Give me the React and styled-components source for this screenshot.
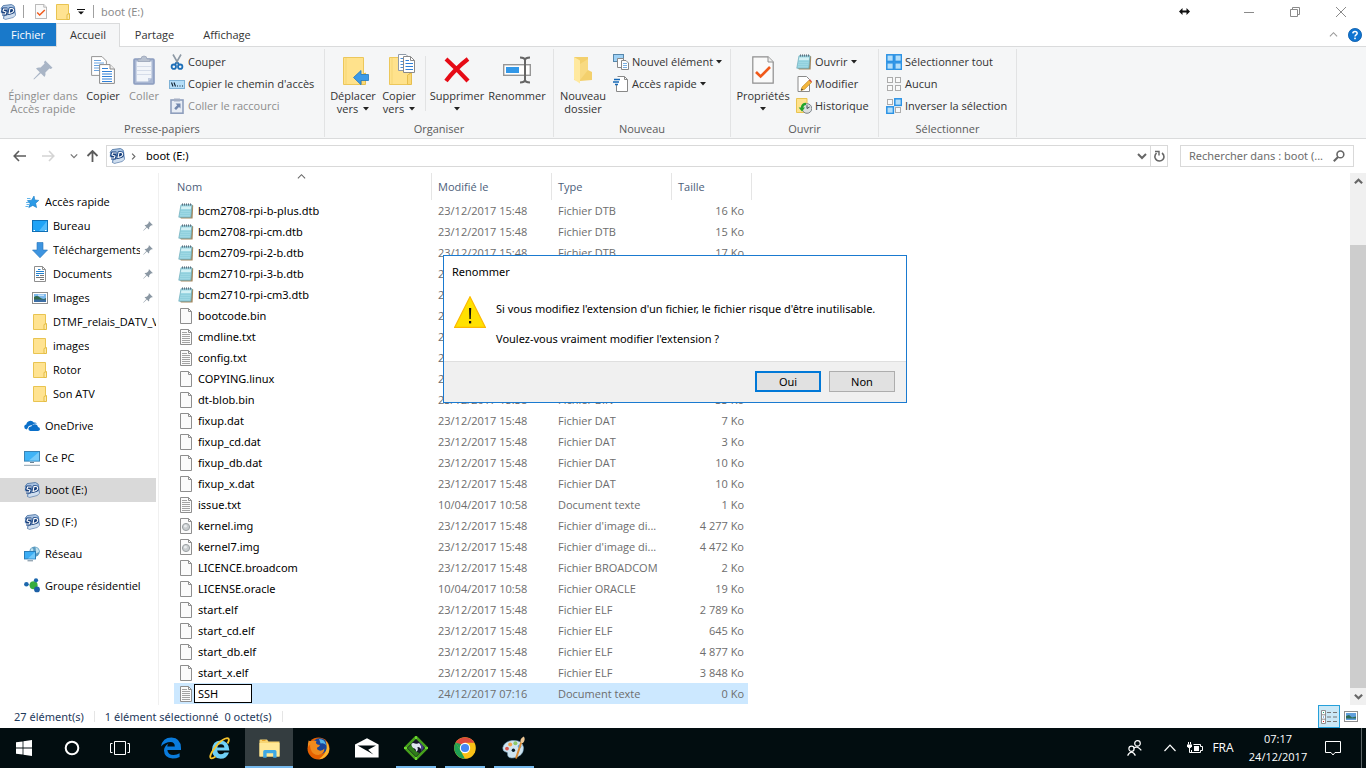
import React, { useState } from 'react';
import styled, { createGlobalStyle } from 'styled-components';

const GlobalStyle = createGlobalStyle`
	* {
		box-sizing: border-box;
	}
	body {
		margin: 0;
		background: #fff;
		color: #000;
		font-family: 'Open Sans', 'Noto Sans', sans-serif;
		font-size: 11px;
		line-height: 16px;
	}
	button, input {
		font: inherit;
		color: inherit;
	}
	svg {
		display: block;
		flex: none;
	}
`;

const wideFont = "'Noto Sans', 'Open Sans', sans-serif";

/* ---------- icons ---------- */

const SdIcon = () => (
	<svg width="16" height="16" viewBox="0 0 16 16">
		<path d="M3.2 1.6 L11.5 .5 L14.2 2.2 L14.6 5 L4 6 L1 4.4Z" fill="#a9c3e2" stroke="#47709f" strokeWidth=".8" />
		<path d="M1 4.4 L4 5 L15 3 L15.8 10.6 L13 13.4 L5.5 15.4 L3 14.6 L3.6 10 L.8 9Z" fill="#6f97c8" />
		<path d="M4.4 11.6 L15 8.6 L15.6 11.4 L13 13.6 L5.6 15.4 L3.4 14.5Z" fill="#cfdeef" stroke="#5577a3" strokeWidth=".6" />
		<path d="M7.4 5 H3.6 L3 7 L6 8 L5.4 10 H2" fill="none" stroke="#173f7c" strokeWidth="3" />
		<path d="M10 4.6 L9 9.4 Q13.2 9 13.8 6.4 Q13.8 4.2 10 4.6Z" fill="#173f7c" stroke="#173f7c" strokeWidth="2.6" />
		<path d="M7.4 5 H3.6 L3 7 L6 8 L5.4 10 H2" fill="none" stroke="#fff" strokeWidth="1.1" />
		<path d="M10 4.6 L9 9.4 Q13.2 9 13.8 6.4 Q13.8 4.2 10 4.6Z" fill="none" stroke="#fff" strokeWidth="1.1" />
	</svg>
);

const CheckDoc = ({ width, height }) => (
	<svg width={width} height={height} viewBox="0 0 22 28" preserveAspectRatio="none">
		<path d="M.8 .8 H16 L21.2 6 V27.2 H.8Z" fill="#fafafa" stroke="#8e8e8e" strokeWidth="1.2" />
		<path d="M16 .8 V6 H21.2" fill="#eee" stroke="#8e8e8e" />
		<path d="M4 16 L8.6 20.5 L18 11" fill="none" stroke="#f0591a" strokeWidth="2.6" />
	</svg>
);

const FolderIcon = () => (
	<svg width="14" height="16" viewBox="0 0 14 16">
		<path d="M.5 .5 H12.5 V15.5 H.5Z" fill="#ffe391" stroke="#e9c451" />
		<path d="M11 10.5 L13.5 9.5 V15.5 H11Z" fill="#ffe9a6" stroke="#e4bd45" />
	</svg>
);

const PinIcon = ({ size = 10, color = '#8a97a3' }) => (
	<svg width={size} height={size} viewBox="0 0 20 20">
		<path d="M12.2 .5 L19.5 7.8 L17.8 9 L16.4 8.4 L12.4 12.4 Q13 15 11.5 17 L7.8 13.2 L1 19.6 L.4 19 L6.8 12.2 L3 8.4 Q5 7 7.6 7.6 L11.6 3.6 L11 2.2Z" fill={color} />
	</svg>
);

const CopyIcon = () => (
	<svg width="24" height="28" viewBox="0 0 24 28">
		<path d="M.6 .6 H11 L15.4 5 V19.4 H.6Z" fill="#fff" stroke="#969696" />
		<path d="M3 4.5H10M3 7H13M3 9.5H13M3 12H13M3 14.5H13" stroke="#6ba4e0" />
		<path d="M8.6 8.6 H19 L23.4 13 V27.4 H8.6Z" fill="#fff" stroke="#8a8a8a" />
		<path d="M19 8.6 V13 H23.4" fill="#eee" stroke="#8a8a8a" />
		<path d="M11 12.5H17M11 15.5H21M11 18H21M11 20.5H21M11 23H21M11 25.5H21" stroke="#2f7fd6" />
	</svg>
);

const PasteIcon = () => (
	<svg width="22" height="30" viewBox="0 0 22 30">
		<rect x="1" y="4" width="20" height="25" rx="1" fill="#a9b7d3" stroke="#8c9dc0" strokeWidth="1.6" />
		<path d="M3.5 6.5 H18.5 V23 L15 26.5 H3.5Z" fill="#f2f5fa" />
		<path d="M4 11.5H18M4 15.5H18M4 19.5H18" stroke="#d5dce9" />
		<path d="M15 26.5 V23 H18.5Z" fill="#c1cbdf" />
		<path d="M5 6.5 V4 H8 Q8 1 11 1 Q14 1 14 4 H17 V6.5Z" fill="#b8c1d0" stroke="#96a1b5" strokeWidth=".7" />
	</svg>
);

const ScissorsIcon = () => (
	<svg width="16" height="16" viewBox="0 0 16 16">
		<path d="M4 .5 L10 11 M12 .5 L6 11" stroke="#8d99a5" strokeWidth="1.6" />
		<path d="M8.6 8.4L10.2 11M7.4 8.4L5.8 11" stroke="#1d6fb8" strokeWidth="1.6" />
		<circle cx="4.8" cy="12.7" r="2.2" fill="none" stroke="#1d6fb8" strokeWidth="1.8" />
		<circle cx="11.2" cy="12.7" r="2.2" fill="none" stroke="#1d6fb8" strokeWidth="1.8" />
	</svg>
);

const PathIcon = () => (
	<svg width="16" height="16" viewBox="0 0 16 16">
		<rect x=".5" y="4.5" width="15" height="8" fill="#b5def8" stroke="#7fb2d6" />
		<path d="M2.5 6.5L4 10.5M5 6.5L6.5 10.5" stroke="#123" strokeWidth="1.1" />
		<path d="M8 10h1M10.5 10h1M13 10h1" stroke="#123" />
	</svg>
);

const ShortcutIcon = () => (
	<svg width="16" height="16" viewBox="0 0 16 16">
		<rect x="2" y="2" width="12" height="13.2" fill="#e8edf5" stroke="#8f9fbd" strokeWidth="1.6" />
		<path d="M5 .5H11V3.5H5Z" fill="#a4afc4" />
		<path d="M6.5 5.5 H11.5 V10.5 L10 9 L7 12 L5.2 10.2 L8.2 7.2Z" fill="#7388ae" />
	</svg>
);

const RibbonFolder = ({ children }) => (
	<svg width="32" height="32" viewBox="-6 -3 32 32">
		<path d="M.5 .5 H20.5 V27.5 H.5Z" fill="#ffe28c" stroke="#ecc75b" />
		<path d="M3 1V27" stroke="#f5d675" />
		<path d="M18.5 18 L22.5 16 V27.5 H18.5Z" fill="#fbd977" stroke="#e7bf4f" />
		{children}
	</svg>
);

const MoveArrow = () => (
	<path d="M10.5 20.5 L18 13.5 V17.5 H25.5 V23.5 H18 V27.8Z" fill="#3b9ae8" stroke="#2178c0" strokeWidth=".8" />
);

const MiniPages = () => (
	<g transform="translate(9 -3)">
		<path d="M.5 .5 H8 L11 3.5 V16.5 H.5Z" fill="#fff" stroke="#8f9aa8" />
		<path d="M2.5 4.5H7M2.5 7.5H7M2.5 10.5H7M2.5 13.5H7" stroke="#4c8fd6" />
		<path d="M5.5 2.5 H12.5 L16.5 6.5 V18.5 H5.5Z" fill="#fff" stroke="#8a8a8a" />
		<path d="M12.5 2.5V6.5H16.5" fill="none" stroke="#8a8a8a" />
		<path d="M7.5 6.5H11M7.5 9.5H15M7.5 12.5H15M7.5 15.5H15" stroke="#2f7fd6" />
	</g>
);

const DeleteIcon = () => (
	<svg width="26" height="26" viewBox="0 0 26 26">
		<path d="M2 2 Q13 12 24 24 M24 2 Q11 12 2 24" stroke="#e60b16" strokeWidth="4.2" fill="none" />
	</svg>
);

const RenameIcon = () => (
	<svg width="28" height="28" viewBox="0 0 28 28">
		<rect x=".7" y="8.7" width="26.6" height="10.6" fill="#fff" stroke="#969696" strokeWidth="1.4" />
		<rect x="3" y="11" width="13" height="6" fill="#3298e8" />
		<path d="M17 1.5 Q21.5 1.5 22 4 Q22.5 1.5 27 1.5 M22 3 V25 M17 26.5 Q21.5 26.5 22 24 Q22.5 26.5 27 26.5" stroke="#666" strokeWidth="2" fill="none" />
	</svg>
);

const NewFolderIcon = () => (
	<svg width="20" height="28" viewBox="0 0 20 28">
		<path d="M1 1 H15 V14 L19 16 V24 L7 25 L1 24Z" fill="#f3d06d" />
		<path d="M1 1 L7 4.5 V27.5 L1 23.5Z" fill="#ffe99f" />
		<path d="M7 8 L15 3 V14 L7 24Z" fill="#f8da82" />
	</svg>
);

const NewItemIcon = () => (
	<svg width="16" height="16" viewBox="0 0 16 16">
		<rect x=".5" y=".5" width="10" height="7" fill="#9fd1f5" stroke="#5787ab" />
		<path d="M4.5 4.5H10.5V13.5H4.5Z" fill="#fff" stroke="#888" />
		<path d="M8.5 6.5H13L15.5 9V15.5H8.5Z" fill="#fff" stroke="#888" />
		<path d="M10 9.5H14M10 11.5H14M10 13.5H14" stroke="#7ab0e2" />
	</svg>
);

const EasyAccessIcon = () => (
	<svg width="16" height="16" viewBox="0 0 16 16">
		<path d="M4.5 .5H11.5L14.5 3.5V15.5H3.5V9" fill="#fff" stroke="#888" />
		<path d="M11.5 .5V3.5H14.5" fill="none" stroke="#888" />
		<path d="M1 3.5H7M0 6H6M2 8.5H5" stroke="#1668b5" strokeWidth="1.3" />
	</svg>
);

const NotepadIcon = () => (
	<svg width="16" height="16" viewBox="0 0 16 16">
		<path d="M13 1.5 L15.2 2.4 L14.6 15.5 L3 15.6 L2 14.5Z" fill="#a58a61" />
		<path d="M3 1.8 H14 L12.8 14.2 H.8Z" fill="#9ed8e4" stroke="#68a9b8" strokeWidth=".7" />
		<path d="M3.4 3.4 H13.2 L12.8 6 H3Z" fill="#d3f1f5" />
		<path d="M2.6 7.5H12.8M2.3 9.5H12.5M2 11.5H12.3" stroke="#83c8d7" strokeWidth=".5" />
		<path d="M4.5 .4V2.6M6.5 .4V2.6M8.5 .4V2.6M10.5 .4V2.6M12.5 .4V2.6" stroke="#567" strokeWidth=".9" />
	</svg>
);

const EditIcon = () => (
	<svg width="16" height="16" viewBox="0 0 16 16">
		<path d="M2 .5H10.5L13.5 3.5V15.5H2Z" fill="#fff" stroke="#8a8a8a" />
		<path d="M5 14.5 L6 11 L13 4.2 L15.5 6.4 L8.5 13.4Z" fill="#f4b63c" stroke="#b98322" strokeWidth=".6" />
		<path d="M13 4.2 L14 3.3 L16 5.6 L15.3 6.4Z" fill="#d94c3a" />
		<path d="M5 14.5L5.7 12.4L7 13.8Z" fill="#333" />
	</svg>
);

const HistoryIcon = () => (
	<svg width="16" height="16" viewBox="0 0 16 16">
		<path d="M.5 .5H11V14.5H.5Z" fill="#ffe28c" stroke="#e9c451" />
		<circle cx="11" cy="10.5" r="4.8" fill="#dcdfe0" stroke="#7b8388" />
		<path d="M11 10.5V7.2M11 10.5L13.6 9" stroke="#454b50" />
		<path d="M10 4.8 Q5.2 5 4.8 9.4 H2.6 L6 13.6 L9 9.4 H7.2 Q7.4 7.2 10 7Z" fill="#22a42a" />
	</svg>
);

const SelectIcon = ({ filled }) => (
	<svg width="16" height="16" viewBox="0 0 16 16">
		{[[0, 0], [8, 0], [0, 8], [8, 8]].map(([x, y], i) => (
			<rect
				key={i}
				x={filled[i] ? x + 0.8 : x + 1.5}
				y={filled[i] ? y + 0.8 : y + 1.5}
				width={filled[i] ? 6.6 : 5}
				height={filled[i] ? 6.6 : 5}
				fill={filled[i] ? '#b3defa' : '#fafafa'}
				stroke={filled[i] ? '#2b92e4' : '#acacac'}
				strokeWidth={filled[i] ? 1.5 : 1}
			/>
		))}
	</svg>
);

const PageIcon = ({ lines, disc }) => (
	<svg width="12" height="16" viewBox="0 0 12 16">
		<path d="M.5 .5H8.5L11.5 3.5V15.5H.5Z" fill="#fbfbfb" stroke="#8e8e8e" />
		<path d="M8.5 .5V3.5H11.5" fill="none" stroke="#8e8e8e" />
		{lines && <path d="M2 3.5H7M2 5.5H10M2 7.5H10M2 9.5H10M2 11.5H10M2 13.5H10" stroke="#a3a3a3" />}
		{disc && <circle cx="6" cy="9" r="3.6" fill="#c9cdcf" stroke="#9da2a5" />}
		{disc && <circle cx="5.4" cy="8.2" r="1.4" fill="#e9ecee" />}
	</svg>
);

const StarIcon = () => (
	<svg width="16" height="16" viewBox="0 0 16 16">
		<path d="M10 2 L10.8 6 L14.8 6.4 L11.6 9.2 L12.6 13.6 L8.8 11.4 L4.8 13.6 L6 9.6 L3.4 6.6 L7.6 6.2Z" fill="#2b9ae6" stroke="#1478c4" strokeWidth=".6" />
		<path d="M3 4.5H6.5M2 8.5H5M2.5 10.5H5M1.5 12.5H4.5" stroke="#62b4ea" />
	</svg>
);

const DesktopIcon = () => (
	<svg width="16" height="16" viewBox="0 0 16 16">
		<rect x=".5" y="2.5" width="15" height="11" fill="#1fa3f7" stroke="#0f6fb5" />
		<path d="M15 3 V13 H7Z" fill="#53bbfb" />
		<path d="M1.5 12.5H3M13 12.5H14.5" stroke="#fff" />
	</svg>
);

const DownloadIcon = () => (
	<svg width="16" height="16" viewBox="0 0 16 16">
		<path d="M5 .5H11V8H15.5L8 15.8L.5 8H5Z" fill="#3d94e0" stroke="#2573b8" strokeWidth=".6" />
	</svg>
);

const DocumentsIcon = () => (
	<svg width="16" height="16" viewBox="0 0 16 16">
		<path d="M2.5 .5H10.5L13.5 3.5V15.5H2.5Z" fill="#fff" stroke="#8e8e8e" />
		<path d="M10.5 .5V3.5H13.5" fill="none" stroke="#8e8e8e" />
		<path d="M6 3.5H8.5M4 5.5H12M4 7.5H12M4 9.5H7" stroke="#2480cc" />
		<path d="M8 9.5H12M4 11.5H12M8 13.5H12" stroke="#777" />
	</svg>
);

const PicturesIcon = () => (
	<svg width="16" height="16" viewBox="0 0 16 16">
		<rect x=".5" y="2.5" width="15" height="11" fill="#fff" stroke="#8e8e8e" />
		<rect x="2" y="4" width="12" height="8" fill="#7db9ec" />
		<path d="M2 7Q5 5 8 7.5T14 8V10H2Z" fill="#32684c" />
		<path d="M2 9.5H14V12H2Z" fill="#3c6ea5" />
		<path d="M6 5.2h6" stroke="#e6f2fc" />
	</svg>
);

const OneDriveIcon = () => (
	<svg width="16" height="16" viewBox="0 0 16 16">
		<path d="M2.6 11.6 Q0 11 .2 8.6 Q.5 6.8 2.3 6.6 Q2.6 3.4 5.6 2.9 Q8.4 2.5 9.8 4.6 Q11.6 4 13 5.6 Q9.6 4.9 8 7.2 Q4.4 7 3.8 10Z" fill="#0a6fc9" />
		<path d="M6.4 13 Q4.2 12.6 4.4 10.4 Q4.8 8.4 7.2 8.6 Q8.2 6 11 6.2 Q13.6 6.5 14 9 Q16 9.4 16 11.2 Q15.8 13 14 13Z" fill="#0a6fc9" />
	</svg>
);

const PcIcon = () => (
	<svg width="16" height="16" viewBox="0 0 16 16">
		<rect x=".5" y="1.5" width="15" height="9.6" fill="#40b4f7" stroke="#3b84b5" />
		<path d="M15 2V10.6H5Z" fill="#76cbfa" />
		<path d="M6 12.5H10" stroke="#6b8396" />
		<path d="M0 15.3H16" stroke="#8fa1ad" />
	</svg>
);

const NetworkIcon = () => (
	<svg width="16" height="16" viewBox="0 0 16 16">
		<circle cx="10.6" cy="5.6" r="5.2" fill="#5b9bc0" />
		<path d="M7 2.6Q9.4 1.4 9.4 4T6.2 6Z M11.6 1Q15.2 2.6 15 6L12 7.5Z" fill="#bfe0ee" />
		<rect x=".5" y="5.5" width="11" height="7.4" fill="#3cadf4" stroke="#2a7db8" />
		<path d="M11 6V12.4H4Z" fill="#70c8fa" />
		<path d="M3.5 14.8H9" stroke="#6b8396" />
	</svg>
);

const HomegroupIcon = () => (
	<svg width="16" height="16" viewBox="0 0 16 16">
		<path d="M2.5 6L9.5 8L11.5 2.5M9.5 8L12.6 12" stroke="#9bbdd8" strokeWidth=".8" fill="none" />
		<circle cx="9.6" cy="7.2" r="4" fill="#38ad3d" />
		<circle cx="2.4" cy="6.2" r="2.3" fill="#1c67ad" />
		<circle cx="12" cy="2.3" r="2.1" fill="#1c67ad" />
		<circle cx="13" cy="11.4" r="2.9" fill="#1c5fa6" />
	</svg>
);

const Arrow = ({ dir, color }) => (
	<svg width="13" height="12" viewBox="0 0 13 12">
		{dir === 'back' && <path d="M13 6H1.5M6 1L1.2 6L6 11" stroke={color} strokeWidth="1.6" fill="none" />}
		{dir === 'forward' && <path d="M0 6H11.5M7 1L11.8 6L7 11" stroke={color} strokeWidth="1.6" fill="none" />}
		{dir === 'up' && <path d="M6.5 12V1M1.5 6L6.5 1L11.5 6" stroke={color} strokeWidth="1.8" fill="none" />}
	</svg>
);

const Chevron = ({ dir = 'down', color = '#666', w = 9, thick = 1.6 }) => {
	const turn = { down: 0, up: 180, right: -90 }[dir];
	return (
		<svg width={w} height={w} viewBox="0 0 10 10">
			<path d="M1 3L5 7L9 3" transform={`rotate(${turn} 5 5)`} stroke={color} strokeWidth={thick} fill="none" />
		</svg>
	);
};

const Caret = () => (
	<svg width="6" height="4" viewBox="0 0 6 4">
		<path d="M0 0H6L3 3.6Z" fill="#222" />
	</svg>
);

/* ---------- title bar and tabs ---------- */

const Window = styled.div`
	display: flex;
	flex-direction: column;
	height: 100vh;
	overflow: hidden;
`;

const TitleBar = styled.header`
	display: flex;
	align-items: center;
	height: 23px;
	flex: none;
	padding-right: 2px;
	color: #8c8c8c;
`;

const Separator = styled.span`
	width: 1px;
	height: 13px;
	margin: 0 ${(p) => p.$after}px 0 ${(p) => p.$before}px;
	background: #a0a0a0;
`;

const IconButton = styled.button`
	display: flex;
	align-items: center;
	justify-content: center;
	width: ${(p) => p.$w || 22}px;
	height: ${(p) => p.$h || 22}px;
	padding: 0;
	border: 0;
	background: none;
`;

const Title = styled.span`
	flex: 1;
	font-family: ${wideFont};
`;

const WindowButtons = styled.div`
	display: flex;
	align-items: center;
`;

const TabRow = styled.div`
	display: flex;
	height: 24px;
	flex: none;
	border-bottom: 1px solid #dadbdc;
`;

const Tab = styled.button`
	width: ${(p) => p.$w}px;
	height: 24px;
	padding: 0 0 2px;
	border: 1px solid ${(p) => (p.$active ? '#dadbdc' : 'transparent')};
	border-bottom: 0;
	background: ${(p) => (p.$active ? '#f5f6f7' : 'transparent')};
	color: #333;
`;

const FileTab = styled(Tab)`
	height: 23px;
	padding: 0;
	border: 0;
	background: #1979ca;
	color: #fff;
`;

const TabTools = styled.div`
	display: flex;
	align-items: center;
	margin-left: auto;
`;

/* ---------- ribbon ---------- */

const Ribbon = styled.div`
	display: flex;
	height: 92px;
	flex: none;
	background: #f5f6f7;
	border-bottom: 1px solid #dadbdc;
`;

const Group = styled.section`
	display: flex;
	flex-direction: column;
	width: ${(p) => p.$w}px;
	height: 88px;
	margin-top: 2px;
	padding: 0 3px;
	border-right: 1px solid #e2e3e4;
`;

const GroupBody = styled.div`
	display: flex;
	flex: 1;
`;

const GroupLabel = styled.div`
	height: 16px;
	text-align: center;
	color: #5a5a5a;
`;

const BigButton = styled.button`
	display: flex;
	flex-direction: column;
	align-items: center;
	width: ${(p) => p.$w}px;
	padding: 5px 0 0;
	border: 0;
	background: none;
	line-height: 13px;
	white-space: nowrap;
	color: ${(p) => (p.$off ? '#8d8d8d' : '#333')};
`;

const BigIcon = styled.span`
	display: flex;
	align-items: center;
	justify-content: center;
	height: 32px;
	margin-bottom: 3px;
`;

const SecondLine = styled.span`
	display: flex;
	align-items: center;
	justify-content: center;
	gap: 5px;
	height: 13px;
`;

const InnerLine = styled.span`
	width: 1px;
	height: 55px;
	margin: 7px 4px 0 5px;
	background: #e2e3e4;
`;

const SmallList = styled.div`
	display: flex;
	flex-direction: column;
	margin: 2px 0 0 4px;
`;

const SmallButton = styled.button`
	display: flex;
	align-items: center;
	gap: 3px;
	height: 22px;
	padding: 0;
	border: 0;
	background: none;
	white-space: nowrap;
	color: ${(p) => (p.$off ? '#8d8d8d' : '#333')};
`;

/* ---------- address bar ---------- */

const NavRow = styled.div`
	display: flex;
	align-items: center;
	height: 34px;
	flex: none;
	padding: 0 12px 0 8px;
`;

const AddressBox = styled.div`
	display: flex;
	align-items: center;
	flex: 1;
	height: 22px;
	margin-left: 3px;
	padding-left: 2px;
	border: 1px solid #d9d9d9;
`;

const Crumb = styled.button`
	padding: 0;
	border: 0;
	background: none;
	margin-left: 5px;
	font-family: ${wideFont};
`;

const AddressEnd = styled.div`
	display: flex;
	align-items: center;
	height: 20px;
	margin-left: auto;
`;

const Refresh = styled(IconButton)`
	width: 17px;
	height: 20px;
	border-left: 1px solid #d9d9d9;
`;

const SearchBox = styled.label`
	display: flex;
	align-items: center;
	width: 174px;
	height: 22px;
	margin-left: 12px;
	padding: 0 8px;
	border: 1px solid #d9d9d9;

	input {
		flex: 1;
		min-width: 0;
		padding: 0;
		border: 0;
		outline: 0;
		background: none;
		font-family: ${wideFont};
	}
	input::placeholder {
		color: #6d6d6d;
		opacity: 1;
	}
`;

/* ---------- tree and file list ---------- */

const Main = styled.main`
	display: flex;
	flex: 1;
	min-height: 0;
`;

const Sidebar = styled.nav`
	width: 159px;
	flex: none;
	padding: 17px 2px 0 0;
	border-right: 1px solid #f0f0f0;
`;

const TreeItem = styled.a`
	display: flex;
	align-items: center;
	height: 24px;
	margin-top: ${(p) => (p.$gap ? 8 : 0)}px;
	padding-left: ${(p) => (p.$child ? 32 : 24)}px;
	background: ${(p) => (p.$selected ? '#d9d9d9' : 'transparent')};
	color: #000;
	text-decoration: none;
	white-space: nowrap;
`;

const TreeIcon = styled.span`
	display: flex;
	justify-content: center;
	width: 16px;
	margin-right: 5px;
	flex: none;
`;

const TreeText = styled.span`
	overflow: hidden;
	width: ${(p) => (p.$pinned ? '87px' : 'auto')};
	margin-right: ${(p) => (p.$pinned ? 3 : 0)}px;
`;

const ListArea = styled.div`
	flex: 1;
	min-width: 0;
	padding-left: 15px;
	overflow: hidden;
`;

const FileTable = styled.table`
	width: 578px;
	table-layout: fixed;
	border-collapse: separate;
	border-spacing: 0;
`;

const Th = styled.th`
	height: 27px;
	padding: 0 0 0 ${(p) => (p.$first ? 3 : 6)}px;
	border-right: 1px solid #e5e5e5;
	text-align: left;
	font-weight: 400;
	color: #4c607a;
`;

const SortMark = styled.span`
	position: absolute;
	top: 172px;
	left: 297px;
`;

const Row = styled.tr`
	td {
		background: ${(p) => (p.$selected ? '#cce8ff' : 'transparent')};
		background-clip: padding-box;
	}
`;

const Td = styled.td`
	height: 21px;
	padding: 0 0 0 ${(p) => (p.$right ? 0 : 6)}px;
	color: #6d6d6d;
	white-space: nowrap;
	text-align: ${(p) => (p.$right ? 'right' : 'left')};

	&:last-child {
		padding-right: 4px;
		border-right: 4px solid transparent;
	}
`;

const FileName = styled.div`
	display: flex;
	align-items: center;
	height: 21px;
	color: #000;
	font-family: ${wideFont};
`;

const FileIconBox = styled.span`
	display: flex;
	justify-content: center;
	width: 16px;
	margin: 0 4px 0 -2px;
`;

const RenameInput = styled.input`
	width: 58px;
	height: 19px;
	margin-left: -4px;
	padding: 0 3px;
	border: 1px solid #000;
	outline: 0;
	background: #fff;
`;

const Scrollbar = styled.div`
	display: flex;
	flex-direction: column;
	width: 16px;
	flex: none;
	background: #f0f0f0;
`;

const ScrollButton = styled(IconButton)`
	width: 16px;
	height: 17px;
`;

const ScrollTrack = styled.div`
	flex: 1;
	padding-top: 55px;
`;

const ScrollThumb = styled.div`
	height: 100%;
	background: #cdcdcd;
`;

const StatusBar = styled.footer`
	display: flex;
	align-items: center;
	height: 23px;
	flex: none;
	padding: 0 4px 0 14px;
	color: #1e395b;
	font-family: ${wideFont};
`;

const StatusText = styled.span`
	margin-right: ${(p) => p.$after}px;
`;

const StatusLine = styled.span`
	width: 1px;
	height: 11px;
	margin-right: 10px;
	background: #e5e5e5;
`;

const ViewButton = styled(IconButton)`
	width: 22px;
	height: 23px;
	border: 1px solid ${(p) => (p.$on ? '#26a0da' : 'transparent')};
	background: ${(p) => (p.$on ? '#cbe8f6' : 'none')};
`;

/* ---------- dialog ---------- */

const Dialog = styled.div`
	position: absolute;
	top: 255px;
	left: 443px;
	width: 464px;
	border: 1px solid #1a7ad0;
	background: #fff;
	font-family: ${wideFont};
`;

const DialogTitle = styled.h2`
	margin: 0;
	padding: 8px;
	font-size: 11px;
	font-weight: 400;
	line-height: 16px;
`;

const DialogBody = styled.div`
	display: flex;
	gap: 10px;
	height: 73px;
	padding: 8px 10px 0;

	p {
		margin: 5px 0 14px;
		white-space: nowrap;
	}
	p + p {
		margin: 0;
	}
`;

const DialogFooter = styled.div`
	display: flex;
	justify-content: flex-end;
	gap: 8px;
	padding: 9px 11px 10px;
	border-top: 1px solid #dfdfdf;
	background: #f0f0f0;
`;

const DialogButton = styled.button`
	width: 66px;
	height: 21px;
	padding: 0;
	border: ${(p) => (p.$primary ? '2px solid #0078d7' : '1px solid #adadad')};
	background: #e1e1e1;
	line-height: 15px;
`;

/* ---------- taskbar ---------- */

const Taskbar = styled.div`
	display: flex;
	height: 40px;
	flex: none;
	background: #020d10;
	color: #fff;
`;

const TaskButton = styled.button`
	display: flex;
	align-items: center;
	justify-content: center;
	width: ${(p) => p.$w || 48}px;
	height: 40px;
	padding: 0;
	border: 0;
	background: ${(p) => (p.$active ? '#343d40' : 'none')};
	box-shadow: ${(p) => (p.$active ? 'inset 0 -2px #76b9ed' : 'none')};
	color: #fff;
`;

const TaskApps = styled.div`
	display: flex;
	gap: 1px;
	margin-left: 3px;
`;

const Running = styled.span`
	display: flex;
	align-items: center;
	justify-content: center;
	width: 40px;
	height: 40px;
	border-bottom: 2px solid #76b9ed;
	padding-top: 2px;
`;

const Tray = styled.div`
	display: flex;
	align-items: center;
	margin-left: auto;
`;

const Language = styled(TaskButton)`
	width: 38px;
	font-size: 12px;
`;

const Clock = styled.time`
	width: 72px;
	text-align: center;
	line-height: 18px;
`;

const ShowDesktop = styled.span`
	width: 5px;
	height: 40px;
	margin-left: 10px;
	border-left: 1px solid #5b6467;
`;

const D = '23/12/2017 15:48';
const files = [
	['bcm2708-rpi-b-plus.dtb', D, 'Fichier DTB', '16 Ko', 'note'],
	['bcm2708-rpi-cm.dtb', D, 'Fichier DTB', '15 Ko', 'note'],
	['bcm2709-rpi-2-b.dtb', D, 'Fichier DTB', '17 Ko', 'note'],
	['bcm2710-rpi-3-b.dtb', D, 'Fichier DTB', '17 Ko', 'note'],
	['bcm2710-rpi-cm3.dtb', D, 'Fichier DTB', '16 Ko', 'note'],
	['bootcode.bin', D, 'Fichier BIN', '50 Ko', 'page'],
	['cmdline.txt', D, 'Document texte', '1 Ko', 'text'],
	['config.txt', D, 'Document texte', '2 Ko', 'text'],
	['COPYING.linux', D, 'Fichier LINUX', '19 Ko', 'page'],
	['dt-blob.bin', '23/12/2017 15:38', 'Fichier BIN', '33 Ko', 'page'],
	['fixup.dat', D, 'Fichier DAT', '7 Ko', 'page'],
	['fixup_cd.dat', D, 'Fichier DAT', '3 Ko', 'page'],
	['fixup_db.dat', D, 'Fichier DAT', '10 Ko', 'page'],
	['fixup_x.dat', D, 'Fichier DAT', '10 Ko', 'page'],
	['issue.txt', '10/04/2017 10:58', 'Document texte', '1 Ko', 'text'],
	['kernel.img', D, "Fichier d'image di...", '4 277 Ko', 'disc'],
	['kernel7.img', D, "Fichier d'image di...", '4 472 Ko', 'disc'],
	['LICENCE.broadcom', D, 'Fichier BROADCOM', '2 Ko', 'page'],
	['LICENSE.oracle', '10/04/2017 10:58', 'Fichier ORACLE', '19 Ko', 'page'],
	['start.elf', D, 'Fichier ELF', '2 789 Ko', 'page'],
	['start_cd.elf', D, 'Fichier ELF', '645 Ko', 'page'],
	['start_db.elf', D, 'Fichier ELF', '4 877 Ko', 'page'],
	['start_x.elf', D, 'Fichier ELF', '3 848 Ko', 'page'],
	['SSH', '24/12/2017 07:16', 'Document texte', '0 Ko', 'text'],
];

const tree = [
	{ label: 'Accès rapide', icon: <StarIcon /> },
	{ label: 'Bureau', icon: <DesktopIcon />, child: true, pinned: true },
	{ label: 'Téléchargements', icon: <DownloadIcon />, child: true, pinned: true },
	{ label: 'Documents', icon: <DocumentsIcon />, child: true, pinned: true },
	{ label: 'Images', icon: <PicturesIcon />, child: true, pinned: true },
	{ label: 'DTMF_relais_DATV_V2', icon: <FolderIcon />, child: true },
	{ label: 'images', icon: <FolderIcon />, child: true },
	{ label: 'Rotor', icon: <FolderIcon />, child: true },
	{ label: 'Son ATV', icon: <FolderIcon />, child: true },
	{ label: 'OneDrive', icon: <OneDriveIcon />, gap: true },
	{ label: 'Ce PC', icon: <PcIcon />, gap: true },
	{ label: 'boot (E:)', icon: <SdIcon />, gap: true, selected: true },
	{ label: 'SD (F:)', icon: <SdIcon />, gap: true },
	{ label: 'Réseau', icon: <NetworkIcon />, gap: true },
	{ label: 'Groupe résidentiel', icon: <HomegroupIcon />, gap: true },
];

const FileIcon = ({ kind }) => {
	if (kind === 'note') return <NotepadIcon />;
	return <PageIcon lines={kind === 'text'} disc={kind === 'disc'} />;
};

const Big = ({ icon, lines, w, off, caret }) => (
	<BigButton $w={w} $off={off} disabled={off}>
		<BigIcon>{icon}</BigIcon>
		<span>{lines[0]}</span>
		<SecondLine>
			{lines[1]}
			{caret && <Caret />}
		</SecondLine>
	</BigButton>
);

const Small = ({ icon, label, off, caret }) => (
	<SmallButton $off={off} disabled={off}>
		{icon}
		<span>{label}</span>
		{caret && <Caret />}
	</SmallButton>
);

const RibbonBar = () => (
	<Ribbon>
		<Group $w={325}>
			<GroupBody>
				<Big w={80} off icon={<PinIcon size={20} color="#a9b5c6" />} lines={['Épingler dans', 'Accès rapide']} />
				<Big w={40} icon={<CopyIcon />} lines={['Copier']} />
				<Big w={42} off icon={<PasteIcon />} lines={['Coller']} />
				<SmallList>
					<Small icon={<ScissorsIcon />} label="Couper" />
					<Small icon={<PathIcon />} label="Copier le chemin d'accès" />
					<Small icon={<ShortcutIcon />} label="Coller le raccourci" off />
				</SmallList>
			</GroupBody>
			<GroupLabel>Presse-papiers</GroupLabel>
		</Group>
		<Group $w={229}>
			<GroupBody>
				<Big w={50} icon={<RibbonFolder><MoveArrow /></RibbonFolder>} lines={['Déplacer', 'vers']} caret />
				<Big w={42} icon={<RibbonFolder><MiniPages /></RibbonFolder>} lines={['Copier', 'vers']} caret />
				<InnerLine />
				<Big w={54} icon={<DeleteIcon />} lines={['Supprimer']} caret />
				<Big w={66} icon={<RenameIcon />} lines={['Renommer']} />
			</GroupBody>
			<GroupLabel>Organiser</GroupLabel>
		</Group>
		<Group $w={177}>
			<GroupBody>
				<Big w={52} icon={<NewFolderIcon />} lines={['Nouveau', 'dossier']} />
				<SmallList>
					<Small icon={<NewItemIcon />} label="Nouvel élément" caret />
					<Small icon={<EasyAccessIcon />} label="Accès rapide" caret />
				</SmallList>
			</GroupBody>
			<GroupLabel>Nouveau</GroupLabel>
		</Group>
		<Group $w={148}>
			<GroupBody>
				<Big w={58} icon={<CheckDoc width={22} height={28} />} lines={['Propriétés']} caret />
				<SmallList>
					<Small icon={<NotepadIcon />} label="Ouvrir" caret />
					<Small icon={<EditIcon />} label="Modifier" />
					<Small icon={<HistoryIcon />} label="Historique" />
				</SmallList>
			</GroupBody>
			<GroupLabel>Ouvrir</GroupLabel>
		</Group>
		<Group $w={138}>
			<GroupBody>
				<SmallList>
					<Small icon={<SelectIcon filled={[1, 1, 1, 1]} />} label="Sélectionner tout" />
					<Small icon={<SelectIcon filled={[0, 0, 0, 0]} />} label="Aucun" />
					<Small icon={<SelectIcon filled={[0, 1, 1, 0]} />} label="Inverser la sélection" />
				</SmallList>
			</GroupBody>
			<GroupLabel>Sélectionner</GroupLabel>
		</Group>
	</Ribbon>
);

const FileList = () => {
	const [name, setName] = useState('SSH');
	return (
		<FileTable>
			<colgroup>
				<col width="258" />
				<col width="120" />
				<col width="120" />
				<col width="80" />
			</colgroup>
			<thead>
				<tr>
					<Th $first>Nom</Th>
					<Th>Modifié le</Th>
					<Th>Type</Th>
					<Th>Taille</Th>
				</tr>
			</thead>
			<tbody>
				{files.map(([file, date, type, size, kind]) => (
					<Row key={file} $selected={file === 'SSH'}>
						<Td>
							<FileName>
								<FileIconBox>
									<FileIcon kind={kind} />
								</FileIconBox>
								{file === 'SSH' ? (
									<RenameInput aria-label="Nom" value={name} onChange={(e) => setName(e.target.value)} />
								) : (
									file
								)}
							</FileName>
						</Td>
						<Td>{date}</Td>
						<Td>{type}</Td>
						<Td $right>{size}</Td>
					</Row>
				))}
			</tbody>
		</FileTable>
	);
};

const RenameDialog = () => (
	<Dialog role="dialog" aria-labelledby="dialog-title">
		<DialogTitle id="dialog-title">Renommer</DialogTitle>
		<DialogBody>
			<svg width="32" height="32" viewBox="0 0 32 32">
				<path d="M16 .8L31.4 31.4H.6Z" fill="#ffe100" stroke="#fcb900" strokeWidth="1.2" />
				<path d="M15 12H17.2L16.8 23H15.4Z" fill="#111" />
				<rect x="15" y="25" width="2.2" height="2.4" fill="#111" />
			</svg>
			<div>
				<p>Si vous modifiez l'extension d'un fichier, le fichier risque d'être inutilisable.</p>
				<p>Voulez-vous vraiment modifier l'extension ?</p>
			</div>
		</DialogBody>
		<DialogFooter>
			<DialogButton $primary>Oui</DialogButton>
			<DialogButton>Non</DialogButton>
		</DialogFooter>
	</Dialog>
);

const TaskbarRow = () => (
	<Taskbar>
		<TaskButton aria-label="Démarrer">
			<svg width="16" height="16" viewBox="0 0 16 16">
				<path d="M0 2.3L6.6 1.4V7.6H0ZM7.4 1.2L16 0V7.6H7.4ZM0 8.4H6.6V14.6L0 13.7ZM7.4 8.4H16V16L7.4 14.8Z" fill="#fff" />
			</svg>
		</TaskButton>
		<TaskButton aria-label="Cortana">
			<svg width="16" height="16" viewBox="0 0 16 16">
				<circle cx="8" cy="8" r="6.3" fill="none" stroke="#fff" strokeWidth="2" />
			</svg>
		</TaskButton>
		<TaskButton aria-label="Vue des tâches">
			<svg width="20" height="14" viewBox="0 0 20 14">
				<path d="M4.5 .5H15.5V13.5H4.5ZM2.5 2.5H.5V11.5H2.5M17.5 2.5H19.5V11.5H17.5" fill="none" stroke="#fff" />
			</svg>
		</TaskButton>
		<TaskApps>
			<TaskButton aria-label="Edge">
				<svg width="20" height="22" viewBox="0 0 20 22">
					<path d="M0 9.5 Q1.5 .5 10.5 .5 Q19.8 1 20 11 V13 H6.4 Q6.8 18 12.6 18 Q16 18 18.6 16.2 V20 Q15.6 21.6 11.6 21.6 Q3.2 21 3 13.6 Q3 9.4 7.4 6.6 Q6.4 7.8 6.3 9.6 H13.8 Q13.8 5 9.6 5 Q4 5.2 0 9.5Z" fill="#0a7bdc" />
				</svg>
			</TaskButton>
			<TaskButton aria-label="Internet Explorer">
				<svg width="22" height="23" viewBox="0 0 22 23">
					<path fillRule="evenodd" d="M11.5 3.4 Q20 3.8 20.4 13.6 H8.2 Q8.6 17.2 12 17.2 Q14.4 17.2 15.4 15.4 H20 Q17.8 21.6 11.6 21.8 Q3.4 21.4 3 12.8 Q3.4 3.8 11.5 3.4ZM8.3 10.4H15.4Q15 7.2 12 7.2T8.3 10.4Z" fill="#6fd0f7" />
					<path d="M18.5 6.5 Q21.5 1.2 18.2 1.2 Q13.5 1.6 7.5 8.6 Q1.2 16.4 1.2 20 Q1.6 23 6.6 19.6" fill="none" stroke="#f8c52c" strokeWidth="1.8" />
				</svg>
			</TaskButton>
			<TaskButton aria-label="Explorateur" $active>
				<svg width="21" height="19" viewBox="0 0 21 19">
					<path d="M.5 1.5 Q.5 .5 1.5 .5H8L9.5 2.5H20.5V17.5H.5Z" fill="#f7d573" />
					<path d="M.5 4H20.5V17.5H.5Z" fill="#ffe897" />
					<path d="M3 1.5H6.5" stroke="#e8a52a" />
					<path d="M4.2 18.8V12.5Q4.2 11 5.7 11H16Q17.5 11 17.5 12.5V18.8H14.2V14.2H7.6V18.8Z" fill="#3ea8e4" />
				</svg>
			</TaskButton>
			<TaskButton aria-label="Firefox">
				<svg width="23" height="23" viewBox="0 0 23 23">
					<circle cx="11.5" cy="11.5" r="11" fill="#e66000" />
					<circle cx="12.8" cy="9.2" r="8" fill="#19459a" />
					<path d="M12 2Q18 2 19 8Q17 5.6 13.6 6.4Z" fill="#53b4e8" />
					<path d="M1.6 3.4Q3 4.4 5 4Q7.6 2.8 9.6 4.4Q8 6 10.4 7.4L13 8Q12.6 9.8 10.2 10.4Q9.4 12.6 12.4 13.6Q15.8 14 17.4 11.6Q17.4 17.6 11.4 18Q5.4 18 3.6 12Q2.8 9 3.2 7.4L1 10Q.6 6.6 1.6 3.4Z" fill="#f08a1d" />
					<path d="M18.4 3.6Q23.6 9.4 21.6 15.4Q18.6 21.6 12 22.2Q18.6 17.6 19.6 11.6Q20 7 18.4 3.6Z" fill="#fbb72e" />
				</svg>
			</TaskButton>
			<TaskButton aria-label="Courrier">
				<svg width="24" height="20" viewBox="0 0 24 20">
					<path d="M0 6.5L12 .3L23.6 6.5V19.4H0Z" fill="#fff" />
					<path d="M2.6 7.6H21L13.2 11.8L18.4 16.4Z" fill="#020d10" />
				</svg>
			</TaskButton>
			<TaskButton aria-label="SDR">
				<Running>
					<svg width="24" height="24" viewBox="0 0 24 24">
						<path d="M12 1L23 12L12 23L1 12Z" fill="#17142a" stroke="#46a01c" strokeWidth="2.6" />
						<path d="M3.6 12L12 20.4L15.5 17Q9 15 8 8Z" fill="#2f7d18" />
						<path d="M11 .6L12 0L13 .6V3H11ZM11 21H13V24H11ZM0 11H3V13H0ZM21 11H24V13H21Z" fill="#6cd72e" />
						<path d="M7.4 8Q8.6 6.4 11 7.4Q13.6 8 15 7Q17.6 9 17.4 13.6Q16 10.6 13.4 11.2Q14.8 14.2 12 15.8Q12.4 13 10.6 12.4Q7.6 12 7.4 8Z" fill="#dfe5ee" />
						<path d="M14.6 6Q19 8.6 19.8 12L17 15.4Q18.4 10 14.6 6Z" fill="#4a3f8c" />
					</svg>
				</Running>
			</TaskButton>
			<TaskButton aria-label="Chrome">
				<Running>
					<svg width="22" height="22" viewBox="0 0 22 22">
						<circle cx="11" cy="11" r="10.8" fill="#fbc116" />
						<path d="M11 11L1.6 5.6Q4.6 .4 11 .2Q17.6 .4 20.4 5.8H11Z" fill="#dd4b3e" />
						<path d="M1.6 5.6L8 16L11.4 21.8Q3 21.6 .6 14Q-.6 9.4 1.6 5.6Z" fill="#1fa055" />
						<path d="M6.4 13.6L1.6 5.6L8 7.6Z" fill="#1fa055" />
						<path d="M11 11L15.6 13.6L11 21.8L8 16Z" fill="#fbc116" />
						<circle cx="11" cy="11" r="5.2" fill="#fff" />
						<circle cx="11" cy="11" r="4.1" fill="#4587f3" />
					</svg>
				</Running>
			</TaskButton>
			<TaskButton aria-label="Paint">
				<Running>
					<svg width="24" height="24" viewBox="0 0 24 24">
						<path d="M10 4.5Q20 3.6 21.4 11Q22.4 19.6 12 21.8Q6 22.6 5.6 19Q6.4 16 3.4 15.8Q.6 15 .8 11.8Q2 5.6 10 4.5Z" fill="#cfe4f0" stroke="#7ba6c2" strokeWidth=".6" />
						<circle cx="5" cy="12.6" r="1.9" fill="#d9544b" />
						<circle cx="8.2" cy="8.6" r="2" fill="#f0a24a" />
						<circle cx="13.4" cy="7.2" r="2" fill="#8cc968" />
						<circle cx="17.6" cy="10.4" r="1.8" fill="#59a5de" />
						<circle cx="11.4" cy="14.2" r="1.7" fill="#0b1c26" />
						<path d="M14 22.5L19.4 6" stroke="#d98a35" strokeWidth="2" />
						<path d="M18.6 6.4Q17.6 2.4 21.8 .4Q24 3.4 20.8 7.2Z" fill="#ecc795" />
					</svg>
				</Running>
			</TaskButton>
		</TaskApps>
		<Tray>
			<TaskButton $w={40} aria-label="Contacts">
				<svg width="15" height="16" viewBox="0 0 15 16">
					<circle cx="10.5" cy="3.4" r="2.8" fill="none" stroke="#fff" strokeWidth="1.2" />
					<path d="M6.5 8.4Q10 5 14.3 10.4" fill="none" stroke="#fff" strokeWidth="1.2" />
					<circle cx="4.5" cy="8.8" r="2.6" fill="none" stroke="#fff" strokeWidth="1.2" />
					<path d="M.6 15.6Q4.5 8.8 8.4 15.6" fill="none" stroke="#fff" strokeWidth="1.2" />
				</svg>
			</TaskButton>
			<TaskButton $w={32} aria-label="Icônes cachées">
				<svg width="12" height="8" viewBox="0 0 12 8">
					<path d="M.5 7L6 1.2L11.5 7" fill="none" stroke="#fff" strokeWidth="1.2" />
				</svg>
			</TaskButton>
			<TaskButton $w={18} aria-label="Batterie">
				<svg width="16" height="12" viewBox="0 0 16 12">
					<path d="M6.5 2.5H13.5V4.5H15.5V8.5H13.5V10.5H4.5V8" fill="none" stroke="#fff" />
					<rect x="7" y="4" width="5" height="5" fill="#fff" />
					<path d="M1.5 0V2.5M3.5 0V2.5" stroke="#fff" />
					<path d="M0 2.5H5V4.5L3.5 6H1.5L0 4.5Z" fill="#fff" />
					<path d="M2.5 6V10.5H5" stroke="#fff" fill="none" />
				</svg>
			</TaskButton>
			<Language>FRA</Language>
			<Clock>
				07:17
				<br />
				24/12/2017
			</Clock>
			<TaskButton $w={37} aria-label="Notifications">
				<svg width="16" height="16" viewBox="0 0 16 16">
					<path d="M.5 1.5H15.5V12.5H10L8 15L6 12.5H.5Z" fill="none" stroke="#fff" />
				</svg>
			</TaskButton>
			<ShowDesktop />
		</Tray>
	</Taskbar>
);

const App = () => (
	<>
		<GlobalStyle />
		<Window>
			<TitleBar>
				<SdIcon />
				<Separator $before={7} $after={6} />
				<IconButton aria-label="Propriétés">
					<CheckDoc width={12} height={15} />
				</IconButton>
				<IconButton aria-label="Nouveau dossier">
					<FolderIcon />
				</IconButton>
				<IconButton $w={14} aria-label="Personnaliser">
					<svg width="8" height="6" viewBox="0 0 8 6">
						<path d="M0 .5H8" stroke="#111" />
						<path d="M1 2.5H7L4 5.5Z" fill="#111" />
					</svg>
				</IconButton>
				<Separator $before={5} $after={7} />
				<Title>boot (E:)</Title>
				<WindowButtons>
					<IconButton $w={84} $h={16} aria-label="Redimensionner">
						<svg width="11" height="7" viewBox="0 0 11 7">
							<path d="M0 3.5L3.5 0V2.6H7.5V0L11 3.5L7.5 7V4.4H3.5V7Z" fill="#111" />
						</svg>
					</IconButton>
					<IconButton $w={46} aria-label="Réduire">
						<svg width="10" height="10" viewBox="0 0 10 10">
							<path d="M0 5.5H10" stroke="#8a8a8a" />
						</svg>
					</IconButton>
					<IconButton $w={46} aria-label="Agrandir">
						<svg width="10" height="10" viewBox="0 0 10 10">
							<path d="M.5 2.5H7.5V9.5H.5ZM2.5 2.5V.5H9.5V7.5H7.5" fill="none" stroke="#8a8a8a" />
						</svg>
					</IconButton>
					<IconButton $w={46} aria-label="Fermer">
						<svg width="10" height="10" viewBox="0 0 10 10">
							<path d="M0 0L10 10M10 0L0 10" stroke="#8a8a8a" />
						</svg>
					</IconButton>
				</WindowButtons>
			</TitleBar>
			<TabRow>
				<FileTab $w={56}>Fichier</FileTab>
				<Tab $w={64} $active>Accueil</Tab>
				<Tab $w={69}>Partage</Tab>
				<Tab $w={76}>Affichage</Tab>
				<TabTools>
					<IconButton aria-label="Réduire le ruban">
						<Chevron dir="up" color="#999" thick={1.2} />
					</IconButton>
					<IconButton aria-label="Aide">
						<svg width="14" height="14" viewBox="0 0 14 14">
							<circle cx="7" cy="7" r="6.6" fill="#0f74d1" stroke="#0a5cab" strokeWidth=".8" />
							<path d="M4.8 5.4Q4.9 3.4 7 3.4T9.2 5.2Q9.2 6.2 7.9 7Q7 7.6 7 8.6" fill="none" stroke="#fff" strokeWidth="1.5" />
							<rect x="6.2" y="9.6" width="1.6" height="1.6" fill="#fff" />
						</svg>
					</IconButton>
				</TabTools>
			</TabRow>
			<RibbonBar />
			<NavRow>
				<IconButton aria-label="Précédent">
					<Arrow dir="back" color="#5c5c5c" />
				</IconButton>
				<IconButton $w={36} aria-label="Suivant">
					<Arrow dir="forward" color="#d4d4d4" />
				</IconButton>
				<IconButton $w={15} aria-label="Emplacements récents">
					<Chevron w={8} color="#777" />
				</IconButton>
				<IconButton aria-label="Dossier parent">
					<Arrow dir="up" color="#5c5c5c" />
				</IconButton>
				<AddressBox>
					<SdIcon />
					<IconButton $w={16} aria-label="Développer">
						<Chevron dir="right" w={7} />
					</IconButton>
					<Crumb>boot (E:)</Crumb>
					<AddressEnd>
						<IconButton $w={16} $h={20} aria-label="Adresses précédentes">
							<Chevron w={10} thick={2} />
						</IconButton>
						<Refresh aria-label="Actualiser">
							<svg width="11" height="12" viewBox="0 0 11 12">
								<path d="M2.5 3Q.5 5 1 7.5Q2 11 5.5 11Q9.5 10.6 10 7Q10 4.4 8 3" fill="none" stroke="#666" strokeWidth="1.6" />
								<path d="M1 1.5H5V5.5" fill="none" stroke="#666" strokeWidth="1.4" />
							</svg>
						</Refresh>
					</AddressEnd>
				</AddressBox>
				<SearchBox>
					<input aria-label="Rechercher" placeholder="Rechercher dans : boot (..." />
					<svg width="12" height="12" viewBox="0 0 12 12">
						<circle cx="7.4" cy="4.4" r="3.4" fill="none" stroke="#666" strokeWidth="1.6" />
						<path d="M5 7L.8 11.2" stroke="#666" strokeWidth="2" />
					</svg>
				</SearchBox>
			</NavRow>
			<Main>
				<Sidebar>
					{tree.map((item) => (
						<TreeItem key={item.label} href="#" $child={item.child} $gap={item.gap} $selected={item.selected}>
							<TreeIcon>{item.icon}</TreeIcon>
							<TreeText $pinned={item.pinned}>{item.label}</TreeText>
							{item.pinned && <PinIcon />}
						</TreeItem>
					))}
				</Sidebar>
				<ListArea>
					<FileList />
				</ListArea>
				<Scrollbar>
					<ScrollButton aria-label="Haut">
						<Chevron dir="up" thick={2.4} />
					</ScrollButton>
					<ScrollTrack>
						<ScrollThumb />
					</ScrollTrack>
					<ScrollButton aria-label="Bas">
						<Chevron thick={2.4} />
					</ScrollButton>
				</Scrollbar>
			</Main>
			<StatusBar>
				<StatusText $after={10}>27 élément(s)</StatusText>
				<StatusLine />
				<StatusText $after={6}>1 élément sélectionné</StatusText>
				<StatusText $after={10}>0 octet(s)</StatusText>
				<StatusLine />
				<TabTools>
					<ViewButton $on aria-label="Détails">
						<svg width="16" height="14" viewBox="0 0 16 14">
							<path d="M.5 .5H4.5V13.5H.5ZM.5 4.8H4.5M.5 9.2H4.5" fill="#fff" stroke="#8f8f8f" />
							<path d="M6 2.5H10M12 2.5H16M6 7H10M12 7H16M6 11.5H10M12 11.5H16" stroke="#777" />
							<path d="M2 2.5H3" stroke="#2a7" />
							<path d="M2 7H3" stroke="#27c" />
							<path d="M2 11.5H3" stroke="#d22" />
						</svg>
					</ViewButton>
					<ViewButton aria-label="Grandes icônes">
						<svg width="14" height="11" viewBox="0 0 14 11">
							<rect x=".5" y=".5" width="13" height="10" fill="#fff" stroke="#8e8e8e" />
							<rect x="2" y="2" width="10" height="7" fill="#5f9fdc" />
							<path d="M2 5L5 4L8 6.5L12 5.6V7.4H2Z" fill="#2f6b55" />
						</svg>
					</ViewButton>
				</TabTools>
			</StatusBar>
			<TaskbarRow />
		</Window>
		<SortMark>
			<Chevron dir="up" w={9} thick={1.2} />
		</SortMark>
		<RenameDialog />
	</>
);

export default App;
